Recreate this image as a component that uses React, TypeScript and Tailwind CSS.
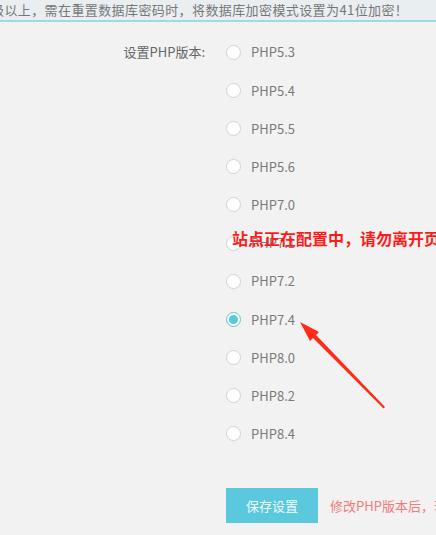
import { FC } from 'react';

const versions = ['5.3', '5.4', '5.5', '5.6', '7.0', '7.1', '7.2', '7.4', '8.0', '8.2', '8.4'];
const font = { fontFamily: '"Microsoft YaHei", "Noto Sans CJK SC", sans-serif' };

const Radio: FC<{ checked?: boolean }> = ({ checked }) => (
  <span
    className={`flex h-[15px] w-[15px] shrink-0 items-center justify-center rounded-full border bg-white ${
      checked ? 'border-[#5bc9dd]' : 'border-[#d2d2d2]'
    }`}
  >
    {checked && <span className="h-[9px] w-[9px] rounded-full bg-[#5bc9dd]" />}
  </span>
);

export default function App() {
  return (
    <div
      className="relative h-[535px] w-[436px] overflow-hidden bg-[#f2f2f2] text-[13px] text-[#666]"
      style={font}
    >
      <div className="flex h-[22px] items-center overflow-hidden whitespace-nowrap border-b-2 border-[#9fd9e4] bg-[#e9eef1] text-[#777]">
        <span className="ml-[-9px] tracking-[0.4px]">级以上，需在重置数据库密码时，将数据库加密模式设置为41位加密！</span>
      </div>

      <div className="flex pt-[11px]">
        <div className="flex h-[38.2px] w-[205px] shrink-0 items-center justify-end text-[#666]">设置PHP版本:</div>
        <div className="ml-[21px] flex flex-col">
          {versions.map((v) => (
            <label key={v} className="flex h-[38.2px] items-center gap-[10px]">
              <Radio checked={v === '7.4'} />
              <span className="text-[#7a7a7a]">PHP{v}</span>
            </label>
          ))}
        </div>
      </div>

      <div className="mt-[35px] flex items-center pl-[226px]">
        <button className="h-[35px] w-[92px] shrink-0 whitespace-nowrap bg-[#5bc9dd] text-[13px] text-[#eefafc]">
          保存设置
        </button>
        <span className="ml-[12px] whitespace-nowrap text-[#f47a7a]">修改PHP版本后，若网站无法访问请联系客服</span>
      </div>

      <div className="absolute left-[232px] top-[226px] whitespace-nowrap text-[16px] font-bold text-[#ff1a1a]">
        站点正在配置中，请勿离开页面
      </div>

      <svg className="absolute left-0 top-0" width="436" height="535" viewBox="0 0 436 535">
        <polygon points="385,407 383.5,408.5 313,338 310,341 300,322 319,332 316,335" fill="#ff2a1a" />
      </svg>
    </div>
  );
}
